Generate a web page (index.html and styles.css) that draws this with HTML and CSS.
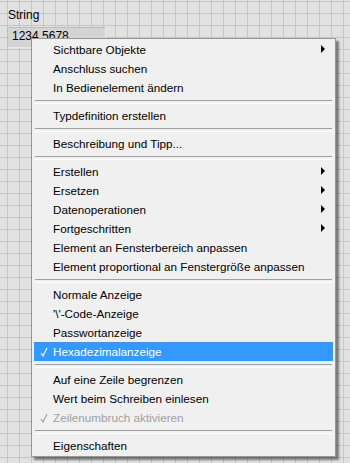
FILE: index.html
```html
<!DOCTYPE html>
<html lang="de">
<head>
    <meta charset="UTF-8">
    <title>String - Kontextmenü</title>
    <link rel="stylesheet" href="styles.css">
</head>
<body>
    <div class="panel">
        <div class="control">
            <div class="control-label">String</div>
            <div class="control-box">1234 5678</div>
        </div>

        <div class="menu">
            <div class="item sub">Sichtbare Objekte</div>
            <div class="item">Anschluss suchen</div>
            <div class="item">In Bedienelement ändern</div>
            <div class="sep"></div>
            <div class="item">Typdefinition erstellen</div>
            <div class="sep"></div>
            <div class="item">Beschreibung und Tipp...</div>
            <div class="sep"></div>
            <div class="item sub">Erstellen</div>
            <div class="item sub">Ersetzen</div>
            <div class="item sub">Datenoperationen</div>
            <div class="item sub">Fortgeschritten</div>
            <div class="item">Element an Fensterbereich anpassen</div>
            <div class="item">Element proportional an Fenstergröße anpassen</div>
            <div class="sep"></div>
            <div class="item">Normale Anzeige</div>
            <div class="item">'\'-Code-Anzeige</div>
            <div class="item">Passwortanzeige</div>
            <div class="item checked active">
                <svg class="check" width="8" height="10" viewBox="0 0 8 10"><path d="M1 6 L3 9 L7 1"/></svg>
                Hexadezimalanzeige
            </div>
            <div class="sep"></div>
            <div class="item">Auf eine Zeile begrenzen</div>
            <div class="item">Wert beim Schreiben einlesen</div>
            <div class="item checked disabled">
                <svg class="check" width="8" height="10" viewBox="0 0 8 10"><path d="M1 6 L3 9 L7 1"/></svg>
                Zeilenumbruch aktivieren
            </div>
            <div class="sep"></div>
            <div class="item">Eigenschaften</div>
        </div>
    </div>
</body>
</html>
```

FILE: styles.css
```css
* {
    margin: 0;
    padding: 0;
    box-sizing: border-box;
}

body {
    width: 350px;
    height: 463px;
    overflow: hidden;
    font-family: 'Liberation Sans', Arial, sans-serif;
    font-size: 12px;
    color: #000;
    background-color: #e1e1e1;
    background-image:
        linear-gradient(to right, #c6c6c6 1px, transparent 1px),
        linear-gradient(to bottom, #c6c6c6 1px, transparent 1px);
    background-size: 12px 12px;
    background-position: 7px 1px;
}

.panel {
    position: relative;
    height: 100%;
}

.control {
    padding: 8px 0 0 8px;
}

.control-label {
    line-height: 15px;
    margin-bottom: 4px;
}

.control-box {
    width: 99px;
    height: 21px;
    margin-left: -1px;
    padding: 1px 0 0 4px;
    background: #d4d4d4;
    border: 1px solid #bdbdbd;
    border-right-color: #e8e8e8;
    border-bottom-color: #e8e8e8;
    line-height: 15px;
}

/* popup menu lies over the panel */
.menu {
    position: absolute;
    left: 31px;
    top: 38px;
    width: 305px;
    height: 419px;
    padding: 1px 1px 0;
    font-size: 11.7px;
    background: #f0f0f0;
    border: 1px solid #979797;
    box-shadow: 3px 3px 2px rgba(0, 0, 0, 0.45);
}

.item {
    position: relative;
    height: 19px;
    line-height: 19px;
    margin: 0 1px;
    padding-left: 19px;
    white-space: nowrap;
}

.item.sub::after {
    content: "";
    position: absolute;
    right: 8px;
    top: 5px;
    border-left: 4px solid #000;
    border-top: 4px solid transparent;
    border-bottom: 4px solid transparent;
}

.item.active {
    background: #3399ff;
    color: #fff;
}

.item.disabled {
    color: #a0a0a0;
}

.check {
    position: absolute;
    left: 6px;
    top: 5px;
    fill: none;
    stroke: currentColor;
    stroke-width: 1.1;
}

.sep {
    height: 9px;
    margin: 0 2px;
    padding-top: 3px;
}

.sep::before {
    content: "";
    display: block;
    height: 2px;
    border-top: 1px solid #a0a0a0;
    border-bottom: 1px solid #fff;
}
```
